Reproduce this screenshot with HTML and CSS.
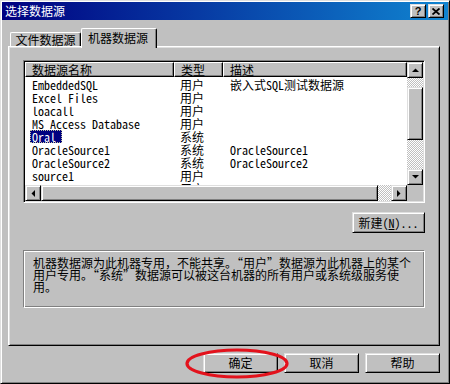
FILE: index.html
```html
<!DOCTYPE html>
<html lang="zh-CN">
<head>
    <meta charset="UTF-8">
    <meta name="viewport" content="width=device-width, initial-scale=1.0">
    <title>选择数据源</title>
    <link rel="stylesheet" href="styles.css">
</head>
<body>
    <div class="window">
        <div class="titlebar">
            <span class="title">选择数据源</span>
            <div class="caption-btns">
                <span class="cap-btn help">?</span>
                <span class="cap-btn">
                    <svg width="8" height="7" viewBox="0 0 8 7"><path d="M0.5 0.5L7.5 6.5M7.5 0.5L0.5 6.5" stroke="#000" stroke-width="1.8"/></svg>
                </span>
            </div>
        </div>

        <div class="dialog-body">
            <div class="tabs">
                <div class="tab">文件数据源</div>
                <div class="tab active">机器数据源</div>
            </div>

            <div class="panel">
                <div class="listbox">
                    <div class="list-view">
                        <div class="list-head">
                            <div class="th">数据源名称</div>
                            <div class="th">类型</div>
                            <div class="th">描述</div>
                        </div>
                        <div class="list-rows">
                            <div class="row"><span>EmbeddedSQL</span><span>用户</span><span>嵌入式SQL测试数据源</span></div>
                            <div class="row"><span>Excel Files</span><span>用户</span><span></span></div>
                            <div class="row"><span>loacall</span><span>用户</span><span></span></div>
                            <div class="row"><span>MS Access Database</span><span>用户</span><span></span></div>
                            <div class="row"><span><em class="sel">Oral</em></span><span>系统</span><span></span></div>
                            <div class="row"><span>OracleSource1</span><span>系统</span><span>OracleSource1</span></div>
                            <div class="row"><span>OracleSource2</span><span>系统</span><span>OracleSource2</span></div>
                            <div class="row"><span>source1</span><span>用户</span><span></span></div>
                            <div class="row"><span>Test</span><span>用户</span><span></span></div>
                        </div>
                    </div>

                    <div class="vscroll">
                        <div class="sb-btn">
                            <svg width="7" height="4" viewBox="0 0 7 4"><path d="M0 4H7L3.5 0.5Z" fill="#000"/></svg>
                        </div>
                        <div class="track" style="height: 9px"></div>
                        <div class="thumb" style="height: 53px"></div>
                        <div class="track grow"></div>
                        <div class="sb-btn">
                            <svg width="7" height="4" viewBox="0 0 7 4"><path d="M0 0H7L3.5 3.5Z" fill="#000"/></svg>
                        </div>
                    </div>

                    <div class="hscroll">
                        <div class="sb-btn">
                            <svg width="4" height="7" viewBox="0 0 4 7"><path d="M4 0V7L0.5 3.5Z" fill="#000"/></svg>
                        </div>
                        <div class="thumb grow"></div>
                        <div class="track" style="width: 13px"></div>
                        <div class="sb-btn">
                            <svg width="4" height="7" viewBox="0 0 4 7"><path d="M0 0V7L3.5 3.5Z" fill="#000"/></svg>
                        </div>
                    </div>

                    <div class="corner"></div>
                </div>

                <div class="new-row">
                    <button class="btn new-btn">新建(<u>N</u>)...</button>
                </div>

                <div class="desc">
                    机器数据源为此机器专用，不能共享。“用户”数据源为此机器上的某个<br>
                    用户专用。“系统”数据源可以被这台机器的所有用户或系统级服务使<br>
                    用。
                </div>
            </div>

            <div class="buttons">
                <button class="btn">确定</button>
                <button class="btn">取消</button>
                <button class="btn">帮助</button>
            </div>
        </div>

        <!-- red marker drawn over the OK button -->
        <svg class="mark" width="104" height="31" viewBox="0 0 104 31">
            <ellipse cx="52" cy="15.5" rx="50" ry="13.5" fill="none" stroke="#e3121c" stroke-width="3.2"/>
        </svg>
    </div>
</body>
</html>
```

FILE: styles.css
```css
body {
    margin: 0;
    font-family: "Noto Sans Mono CJK SC", "Noto Sans CJK SC", "Liberation Mono", monospace;
    font-size: 12px;
    color: #000;
}
.window {
    position: relative;
    box-sizing: border-box;
    width: 450px;
    height: 384px;
    padding: 1px;
    background-color: #c0c0c0;
    border: 1px solid;
    border-color: #dfdfdf #000 #000 #dfdfdf;
    box-shadow: inset 1px 1px #fff, inset -1px -1px #808080;
    overflow: hidden;
}
.titlebar {
    height: 18px;
    display: flex;
    align-items: center;
    justify-content: space-between;
    background: linear-gradient(to right, #000080, #1084d0);
    color: #fff;
}
.title {
    padding-left: 3px;
    line-height: 18px;
}
.caption-btns {
    display: flex;
    gap: 2px;
    padding-right: 4px;
}
.cap-btn, .sb-btn, .thumb, .btn {
    box-sizing: border-box;
    background-color: #c0c0c0;
    border: 1px solid;
    border-color: #dfdfdf #000 #000 #dfdfdf;
    box-shadow: inset 1px 1px #fff, inset -1px -1px #808080;
}
.cap-btn {
    width: 16px;
    height: 14px;
    display: flex;
    align-items: center;
    justify-content: center;
    color: #000;
}
.help {
    font-family: "Liberation Sans", sans-serif;
    font-weight: bold;
    font-size: 11px;
    line-height: 12px;
}
.dialog-body {
    padding: 8px 8px 0 6px;
}
.tabs {
    display: flex;
    align-items: flex-end;
    height: 18px;
    padding-left: 2px;
}
.tab {
    box-sizing: border-box;
    height: 14px;
    width: 71px;
    line-height: 13px;
    text-align: center;
    border-top: 1px solid #fff;
    border-left: 1px solid #fff;
    border-right: 1px solid #000;
    box-shadow: inset -1px 0 #808080;
    border-radius: 2px 2px 0 0;
}
.tab.active {
    position: relative;
    z-index: 1;
    width: 76px;
    height: 20px;
    margin-bottom: -2px;
    line-height: 18px;
    padding-right: 2px;
    background-color: #c0c0c0;
}
.panel {
    box-sizing: border-box;
    height: 300px;
    padding: 13px 14px;
    border: 1px solid;
    border-color: #fff #000 #000 #fff;
    box-shadow: inset 1px 1px #dfdfdf, inset -1px -1px #808080;
}
.listbox {
    box-sizing: border-box;
    width: 402px;
    height: 143px;
    padding: 1px;
    border: 1px solid;
    border-color: #808080 #fff #fff #808080;
    box-shadow: inset 1px 1px #000, inset -1px -1px #dfdfdf;
    display: grid;
    grid-template-columns: 1fr 16px;
    grid-template-rows: 1fr 16px;
}
.list-view {
    background-color: #fff;
    overflow: hidden;
}
.list-head, .row {
    display: grid;
    grid-template-columns: 149px 49px 1fr;
}
.list-head {
    height: 15px;
}
.th {
    box-sizing: border-box;
    padding-left: 6px;
    line-height: 13px;
    background-color: #c0c0c0;
    border: 1px solid;
    border-color: #fff #000 #000 #fff;
    box-shadow: inset -1px -1px #808080;
}
.list-rows {
    padding-top: 1px;
}
.row {
    height: 13px;
    line-height: 13px;
}
.row span {
    padding-left: 7px;
    white-space: nowrap;
}
.row span:nth-child(2) {
    padding-left: 6px;
}
.sel {
    font-style: normal;
    display: inline-block;
    margin-left: -2px;
    padding: 0 6px 0 2px;
    background-color: #000080;
    color: #fff;
    outline: 1px dotted #c0c0a0;
    outline-offset: -1px;
}
.vscroll {
    display: flex;
    flex-direction: column;
}
.hscroll {
    display: flex;
}
.sb-btn {
    flex: none;
    width: 16px;
    height: 16px;
    display: flex;
    align-items: center;
    justify-content: center;
}
.track {
    flex: none;
    background: repeating-conic-gradient(#fff 0 25%, #c0c0c0 0 50%) 0 0 / 2px 2px;
}
.grow {
    flex: 1;
}
.corner {
    background-color: #c0c0c0;
}
.new-row {
    display: flex;
    justify-content: flex-end;
    width: 402px;
    margin-top: 9px;
}
.btn {
    font-family: inherit;
    font-size: 12px;
    color: #000;
    padding: 0;
    width: 75px;
    height: 20px;
    line-height: 16px;
}
.new-btn {
    width: 73px;
    height: 21px;
}
.desc {
    box-sizing: border-box;
    width: 402px;
    height: 58px;
    margin-top: 17px;
    padding: 6px 9px;
    line-height: 12px;
    white-space: nowrap;
    border: 1px solid;
    border-color: #808080 #fff #fff #808080;
    box-shadow: inset 1px 1px #fff, inset -1px -1px #808080;
}
.buttons {
    display: flex;
    justify-content: flex-end;
    gap: 6px;
    margin-top: 7px;
}
.mark {
    position: absolute;
    left: 184px;
    top: 347px;
}
```
